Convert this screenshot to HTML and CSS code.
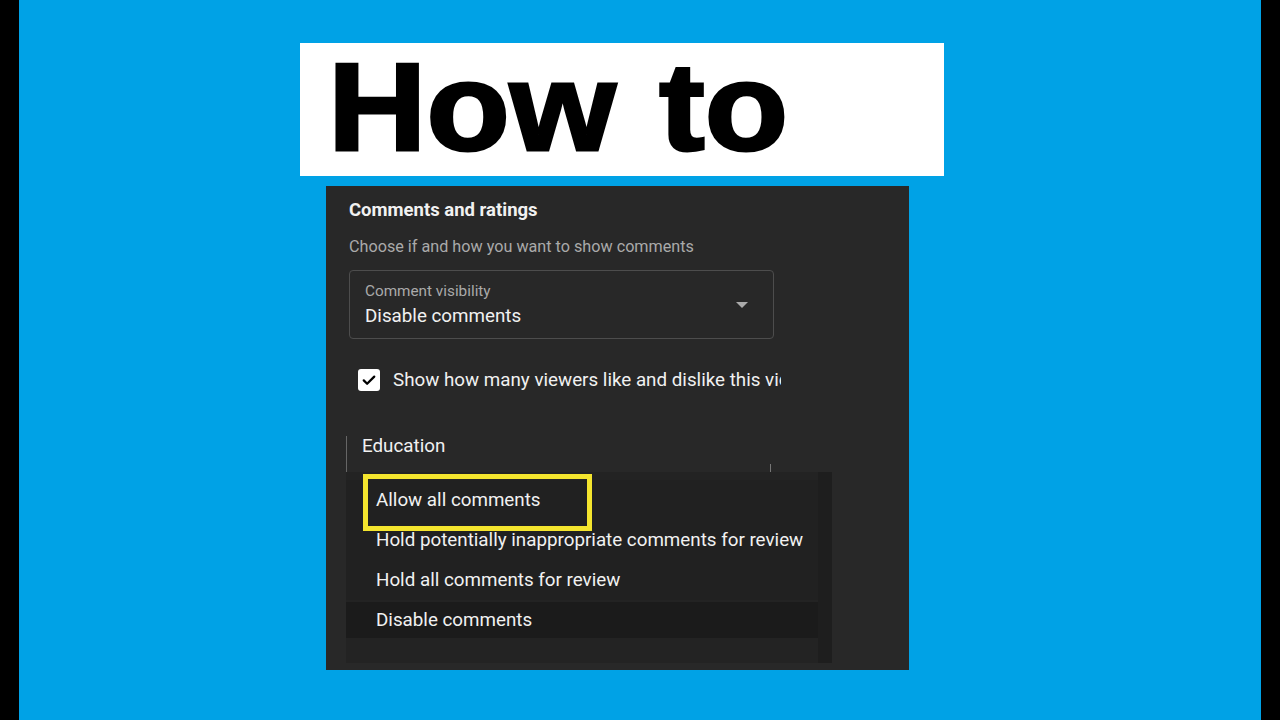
FILE: index.html
```
<!DOCTYPE html>
<html lang="en">
<head>
  <meta charset="UTF-8" />
  <meta name="viewport" content="width=device-width, initial-scale=1.0" />
  <title>How to</title>
  <link rel="stylesheet" href="styles.css">
</head>
<body>

  <div class="stage">
    <div class="banner">
      <h1>How to</h1>
    </div>

    <div class="panel">
      <h2>Comments and ratings</h2>
      <p class="hint">Choose if and how you want to show comments</p>

      <div class="select">
        <div class="select-text">
          <span class="select-label">Comment visibility</span>
          <span class="select-value">Disable comments</span>
        </div>
        <div class="caret"></div>
      </div>

      <label class="check-row">
        <span class="checkbox">
          <svg viewBox="0 0 24 24" width="18" height="18">
            <path d="M5 12.5l4.5 4.5L19 7.5" fill="none" stroke="#000" stroke-width="3" stroke-linecap="round" stroke-linejoin="round" />
          </svg>
        </span>
        <span class="check-text">Show how many viewers like and dislike this video</span>
      </label>

      <div class="category">
        <span>Education</span>
      </div>

      <div class="menu">
        <div class="menu-list">
          <div class="menu-item">Allow all comments</div>
          <div class="menu-item">Hold potentially inappropriate comments for review</div>
          <div class="menu-item">Hold all comments for review</div>
          <div class="menu-item selected">Disable comments</div>
        </div>
        <div class="menu-track"></div>
        <div class="highlight"></div>
      </div>
    </div>
  </div>

</body>
</html>
```

FILE: styles.css
```
* {
  box-sizing: border-box;
}

body {
  margin: 0;
  padding: 0 19px;
  background: #000;
  font-family: Roboto, 'Noto Sans', sans-serif;
}

.stage {
  height: 720px;
  background: #00a2e6;
  padding: 43px 0 0 281px;
  overflow: hidden;
}

.banner {
  width: 644px;
  height: 133px;
  background: #fff;
  padding: 2px 0 0 28px;
}

h1 {
  margin: 0;
  font-family: 'Liberation Sans', Arial, sans-serif;
  font-weight: 700;
  font-size: 124px;
  line-height: 125px;
  color: #000;
  -webkit-text-stroke: 3px #000;
  word-spacing: 5px;
  transform: scaleX(1.1);
  transform-origin: left center;
}

.panel {
  position: relative;
  width: 583px;
  height: 484px;
  margin: 10px 0 0 26px;
  background: #282828;
  padding: 12px 0 0 23px;
  color: #f1f1f1;
}

h2 {
  margin: 0;
  font-size: 18.5px;
  font-weight: 700;
  line-height: 24px;
}

.hint {
  margin: 15px 0 0;
  font-size: 16.2px;
  line-height: 20px;
  color: #aaa;
}

.select {
  display: flex;
  align-items: center;
  width: 425px;
  height: 69px;
  margin-top: 13px;
  padding: 0 25px 0 15px;
  border: 1px solid #4d4d4d;
  border-radius: 4px;
}

.select-text {
  flex-grow: 1;
  display: flex;
  flex-direction: column;
}

.select-label {
  font-size: 15.3px;
  line-height: 18px;
  color: #aaa;
}

.select-value {
  margin-top: 5px;
  font-size: 18.8px;
  line-height: 22px;
}

.caret {
  width: 0;
  height: 0;
  border-top: 6px solid #aaa;
  border-left: 6px solid transparent;
  border-right: 6px solid transparent;
}

.check-row {
  display: flex;
  align-items: center;
  gap: 13px;
  width: 432px;
  margin-top: 29px;
  padding-left: 9px;
  overflow: hidden;
}

.checkbox {
  flex-shrink: 0;
  display: flex;
  align-items: center;
  justify-content: center;
  width: 22px;
  height: 22px;
  background: #fff;
  border-radius: 3px;
}

.check-text {
  font-size: 18.8px;
  line-height: 24px;
  white-space: nowrap;
}

.category {
  position: relative;
  width: 425px;
  height: 50px;
  margin: 44px 0 0 -3px;
  padding-left: 15px;
  border-left: 1px solid #666;
  font-size: 18.8px;
  line-height: 20px;
}

.category::after {
  content: "";
  position: absolute;
  right: 0;
  top: 28px;
  width: 1px;
  height: 10px;
  background: #777;
}

.menu {
  position: absolute;
  left: 20px;
  top: 286px;
  width: 486px;
  height: 191px;
  display: flex;
  background: #232323;
}

.menu-list {
  flex-grow: 1;
  padding-top: 8px;
}

.menu-item {
  height: 40px;
  padding-left: 30px;
  font-size: 18.8px;
  line-height: 40px;
  white-space: nowrap;
  background: #212121;
}

.menu-item.selected {
  height: 36px;
  margin-top: 2px;
  line-height: 36px;
  background: #1b1b1b;
}

.menu-track {
  width: 14px;
  background: #1e1e1e;
}

.highlight {
  position: absolute;
  left: 17px;
  top: 2px;
  width: 229px;
  height: 57px;
  border: 5px solid #f4e52e;
}
```
